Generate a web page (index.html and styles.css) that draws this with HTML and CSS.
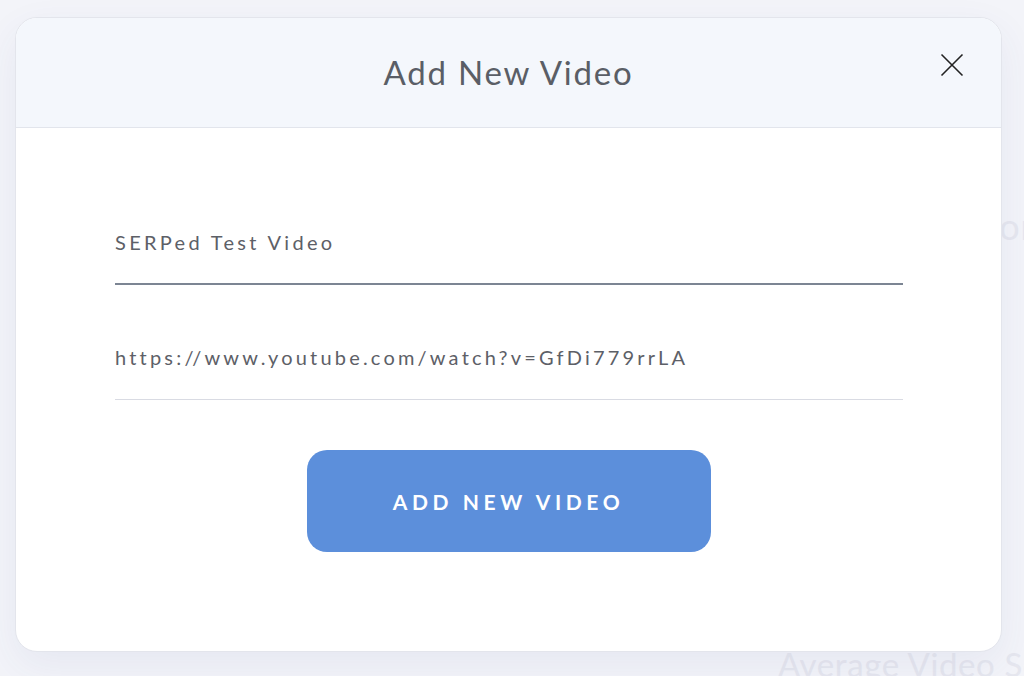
FILE: index.html
```html
<!DOCTYPE html>
<html lang="en">

<head>
    <meta charset="UTF-8">
    <meta name="viewport" content="width=device-width, initial-scale=1.0">
    <title>Add New Video</title>
    <link rel="stylesheet" href="styles.css">
</head>

<body>

    <div class="backdrop">
        <div class="bg-label bg-top">Duration</div>
        <div class="bg-label bg-bottom">Average Video Score</div>
    </div>

    <div class="modal">
        <div class="modal-header">
            <h1 class="modal-title">Add New Video</h1>
            <button class="close-btn" aria-label="Close">
                <svg width="24" height="24" viewBox="0 0 24 24">
                    <path d="M1.5 1.5 L22.5 22.5 M22.5 1.5 L1.5 22.5" stroke="#222" stroke-width="1.6" fill="none" />
                </svg>
            </button>
        </div>
        <div class="modal-body">
            <div class="field field-active">SERPed Test Video</div>
            <div class="field">https://www.youtube.com/watch?v=GfDi779rrLA</div>
            <div class="actions">
                <button class="add-btn">ADD NEW VIDEO</button>
            </div>
        </div>
    </div>

</body>

</html>
```

FILE: styles.css
```css
body {
    margin: 0;
    background: #f3f4f9;
    font-family: Lato, 'Open Sans', sans-serif;
    overflow: hidden;
    height: 676px;
}

.backdrop {
    padding-top: 205px;
}

.bg-label {
    color: #e6e7ef;
    white-space: nowrap;
    line-height: 1.2;
}

.bg-top {
    font-size: 36px;
    letter-spacing: 1px;
    padding-left: 894px;
}

.bg-bottom {
    font-size: 33px;
    letter-spacing: 0.6px;
    padding-left: 778px;
    margin-top: 397px;
}

.modal {
    position: absolute;
    top: 17px;
    left: 15px;
    width: 985px;
    height: 633px;
    background: #fff;
    border: 1px solid #e3e5ec;
    border-radius: 22px;
    overflow: hidden;
    box-shadow: 0 14px 40px rgba(60, 70, 140, 0.07);
}

.modal-header {
    height: 109px;
    background: #f4f7fc;
    border-bottom: 1px solid #e2e5ec;
    display: flex;
    align-items: center;
    justify-content: center;
    position: relative;
}

.modal-title {
    margin: 0 0 2px 0;
    font-size: 33px;
    font-weight: 400;
    color: #5a5e66;
    letter-spacing: 1.8px;
}

.close-btn {
    position: absolute;
    top: 35px;
    right: 37px;
    background: none;
    border: 0;
    padding: 0;
    width: 24px;
    height: 24px;
    cursor: pointer;
}

.modal-body {
    padding: 72px 98px 0 99px;
    display: flex;
    flex-direction: column;
}

.field {
    height: 84px;
    display: flex;
    align-items: center;
    font-size: 20px;
    letter-spacing: 3.2px;
    color: #5d6067;
    border-bottom: 1px solid #d9dbe3;
    margin-bottom: 30px;
}

.field-active {
    border-bottom: 2px solid #7c8593;
    height: 83px;
    letter-spacing: 3.3px;
}

.actions {
    display: flex;
    justify-content: center;
    padding-top: 20px;
    padding-right: 1px;
}

.add-btn {
    width: 404px;
    height: 102px;
    border: 0;
    border-radius: 20px;
    background: #5c8fdb;
    color: #fff;
    font-family: Lato, 'Open Sans', sans-serif;
    font-size: 21px;
    font-weight: 700;
    letter-spacing: 4.6px;
    cursor: pointer;
}
```
